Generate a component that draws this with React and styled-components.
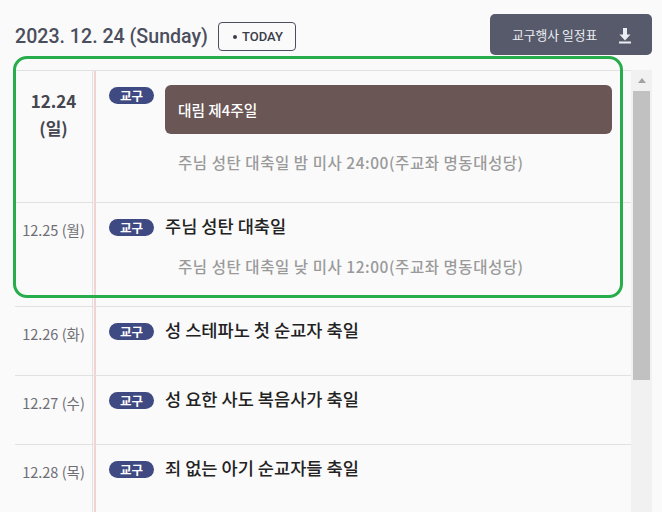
import React from 'react';
import styled, { createGlobalStyle } from 'styled-components';

const GlobalStyle = createGlobalStyle`
  html, body {
    margin: 0;
    padding: 0;
    background: #fafafa;
    overflow: hidden;
  }
  body {
    font-family: 'Noto Sans CJK KR', 'Noto Sans', sans-serif;
  }
`;

const events = [
  {
    date: '12.24',
    day: '일',
    today: true,
    title: '대림 제4주일',
    note: '주님 성탄 대축일 밤 미사 24:00(주교좌 명동대성당)',
  },
  { date: '12.25', day: '월', title: '주님 성탄 대축일', note: '주님 성탄 대축일 낮 미사 12:00(주교좌 명동대성당)' },
  { date: '12.26', day: '화', title: '성 스테파노 첫 순교자 축일' },
  { date: '12.27', day: '수', title: '성 요한 사도 복음사가 축일' },
  { date: '12.28', day: '목', title: '죄 없는 아기 순교자들 축일' },
];

const DownloadIcon = () => (
  <svg width="14" height="16" viewBox="0 0 14 16" fill="currentColor">
    <rect x="5" y="0" width="4" height="7" />
    <path d="M1.5 6.5 H12.5 L7 12.5 Z" />
    <rect x="1" y="13.5" width="12" height="2" />
  </svg>
);

export default function App() {
  return (
    <Page>
      <GlobalStyle />
      <Header>
        <TitleGroup>
          <DateTitle>2023. 12. 24 (Sunday)</DateTitle>
          <TodayBadge>
            <Dot />
            TODAY
          </TodayBadge>
        </TitleGroup>
        <ScheduleButton>
          교구행사 일정표
          <DownloadIcon />
        </ScheduleButton>
      </Header>
      <Body>
        <List>
          {events.map(ev => (
            <Row key={ev.date}>
              <DateCell today={ev.today}>
                {ev.today ? (
                  <>
                    <span>{ev.date}</span>
                    <span>({ev.day})</span>
                  </>
                ) : (
                  <span>
                    {ev.date} ({ev.day})
                  </span>
                )}
              </DateCell>
              <Content>
                <TitleLine>
                  <Badge>교구</Badge>
                  {ev.today ? <FeastBox>{ev.title}</FeastBox> : <EventTitle>{ev.title}</EventTitle>}
                </TitleLine>
                {ev.note && <Note>{ev.note}</Note>}
              </Content>
            </Row>
          ))}
        </List>
        <Scrollbar>
          <ArrowUp />
          <Thumb />
        </Scrollbar>
        <Highlight />
      </Body>
    </Page>
  );
}

const Page = styled.div`
  height: 512px;
  padding: 14px 10px 0 15px;
  box-sizing: border-box;
  overflow: hidden;
`;

const Header = styled.div`
  display: flex;
  align-items: center;
  justify-content: space-between;
  height: 41px;
`;

const TitleGroup = styled.div`
  display: flex;
  align-items: center;
  gap: 10px;
  padding-top: 4px;
`;

const DateTitle = styled.div`
  font-family: Roboto, 'Noto Sans', sans-serif;
  font-size: 19.6px;
  font-weight: 500;
  color: #4b4e5d;
`;

const TodayBadge = styled.div`
  display: flex;
  align-items: center;
  gap: 5px;
  height: 29px;
  box-sizing: border-box;
  padding: 0 12px 0 14px;
  border: 1px solid #4b4e5d;
  border-radius: 4px;
  font-family: Roboto, 'Noto Sans', sans-serif;
  font-size: 13px;
  font-weight: 500;
  color: #3a3d4a;
`;

const Dot = styled.span`
  width: 4px;
  height: 4px;
  border-radius: 50%;
  background: #3a3d4a;
`;

const ScheduleButton = styled.div`
  display: flex;
  align-items: center;
  gap: 21px;
  width: 162px;
  height: 41px;
  box-sizing: border-box;
  padding-left: 22px;
  border-radius: 5px;
  background: #565a6b;
  color: #eceef3;
  font-size: 12.8px;
  svg {
    margin-top: 2px;
  }
`;

const Body = styled.div`
  position: relative;
  display: flex;
  margin-top: 15px;
  height: 442px;
`;

const List = styled.div`
  width: 616px;
  overflow: hidden;
  background: #fafafa;
`;

const Row = styled.div`
  display: flex;
  box-sizing: border-box;
  border-top: 1px solid #e1e1e1;
  min-height: 69px;
`;

const DateCell = styled.div`
  width: 77px;
  flex-shrink: 0;
  border-right: 1px solid #e2e2e2;
  display: flex;
  flex-direction: column;
  align-items: center;
  padding-top: 16px;
  font-size: ${props => (props.today ? '17px' : '14.5px')};
  font-weight: ${props => (props.today ? 700 : 400)};
  line-height: ${props => (props.today ? '27px' : '22px')};
  color: ${props => (props.today ? '#454650' : '#6e6e74')};
`;

const Content = styled.div`
  flex: 1;
  border-left: 2px solid #f3d2d2;
  margin-left: 1px;
  padding: 15px 19px 28px 13px;
`;

const TitleLine = styled.div`
  display: flex;
  align-items: flex-start;
  gap: 11px;
`;

const Badge = styled.span`
  flex-shrink: 0;
  width: 45px;
  height: 17px;
  margin-top: 1px;
  border-radius: 9px;
  background: #3f4a83;
  color: #fff;
  font-size: 12.5px;
  font-weight: 700;
  line-height: 17px;
  text-align: center;
`;

const FeastBox = styled.div`
  flex: 1;
  height: 49px;
  display: flex;
  align-items: center;
  padding-left: 13px;
  margin-top: -1px;
  border-radius: 6px;
  background: #6a5655;
  color: #fff;
  font-size: 14.7px;
  font-weight: 500;
`;

const EventTitle = styled.div`
  font-size: 17.6px;
  font-weight: 500;
  line-height: 24px;
  margin-top: -4px;
  color: #222;
`;

const Note = styled.div`
  margin: 16px 0 0 69px;
  font-size: 15.5px;
  letter-spacing: 0.55px;
  font-weight: 500;
  line-height: 24px;
  color: #9a9a9a;
`;

const Scrollbar = styled.div`
  position: relative;
  width: 21px;
  background: #f1f1f1;
  display: flex;
  flex-direction: column;
  align-items: center;
`;

const ArrowUp = styled.div`
  margin-top: 8px;
  width: 0;
  height: 0;
  border-left: 4px solid transparent;
  border-right: 4px solid transparent;
  border-bottom: 5px solid #a3a3a3;
`;

const Thumb = styled.div`
  margin-top: 8px;
  width: 17px;
  height: 289px;
  background: #c1c1c1;
`;

const Highlight = styled.div`
  position: absolute;
  left: -2px;
  top: -14px;
  width: 610px;
  height: 242px;
  box-sizing: border-box;
  border: 3px solid #27ad4b;
  border-radius: 14px;
  pointer-events: none;
`;
